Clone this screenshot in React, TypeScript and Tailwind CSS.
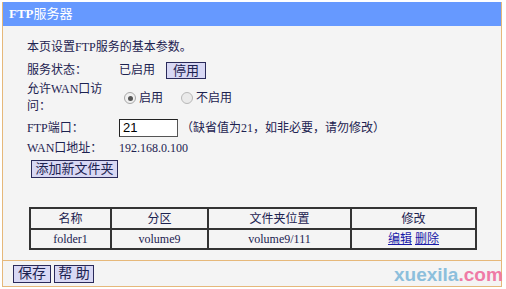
import React from 'react'

const font = { fontFamily: '"Liberation Serif", "Noto Sans CJK SC", serif' }

export default function App() {
  return (
    <div className="relative w-[506px] h-[289px] bg-white text-[12px] text-[#1c2250]" style={font}>
      <div className="ml-[2px] mt-[2px] w-[500px] border-x border-b border-[#e6b87a]">
        {/* title bar */}
        <div className="h-[24px] bg-[#6699ff] pl-[6px] flex items-center text-white text-[13px]">
          <span className="font-bold">FTP</span>
          <span>服务器</span>
        </div>

        <div className="bg-[#f4f4f4] pl-[24px] pt-[11px] pb-[10px] border-b border-[#e6b87a]">
          <div className="h-[20px] flex items-center">本页设置FTP服务的基本参数。</div>

          <div className="mt-[3px] h-[20px] flex items-center">
            <div className="w-[92px]">服务状态：</div>
            <span>已启用</span>
            <button className="ml-[11px] w-[40px] h-[17px] bg-[#d8d8f4] border border-[#2a2a5a] leading-[15px] text-[13px]">停用</button>
          </div>

          <div className="h-[36px] flex items-center">
            <div className="w-[92px] leading-[17px]">
              <div className="w-[80px]">允许WAN口访问：</div>
            </div>
            <label className="ml-[5px] flex items-center gap-[3px]">
              <span className="w-[12px] h-[12px] rounded-full border border-[#a8a8a8] bg-[#f0f0f0] flex items-center justify-center">
                <span className="w-[5px] h-[5px] rounded-full bg-[#555]" />
              </span>
              启用
            </label>
            <label className="ml-[18px] flex items-center gap-[3px]">
              <span className="w-[12px] h-[12px] rounded-full border border-[#b8b8b8] bg-[#eaeaea]" />
              不启用
            </label>
          </div>

          <div className="mt-[2px] h-[19px] flex items-center">
            <div className="w-[92px]">FTP端口：</div>
            <div className="w-[59px] h-[18px] bg-white border border-[#555] border-t-[#222] border-l-[#222] pl-[3px] leading-[16px] text-[13px] text-black" style={{ fontFamily: '"Liberation Sans", sans-serif' }}>21</div>
            <span className="ml-[3px]">（缺省值为21，如非必要，请勿修改）</span>
          </div>

          <div className="mt-[1px] h-[20px] flex items-center">
            <div className="w-[92px]">WAN口地址：</div>
            <span>192.168.0.100</span>
          </div>

          <button className="mt-[2px] ml-[4px] w-[87px] h-[18px] bg-[#d8d8f4] border border-[#2a2a5a] leading-[16px] text-[13px] block">添加新文件夹</button>

          <table className="mt-[29px] ml-[2px] w-[448px] border-collapse text-center border-2 border-[#333]">
            <tbody>
              <tr className="h-[21px]">
                <td className="w-[81px] border-2 border-[#333]">名称</td>
                <td className="w-[97px] border-2 border-[#333]">分区</td>
                <td className="w-[143px] border-2 border-[#333]">文件夹位置</td>
                <td className="border-2 border-[#333]">修改</td>
              </tr>
              <tr className="h-[20px]">
                <td className="border-2 border-[#333]">folder1</td>
                <td className="border-2 border-[#333]">volume9</td>
                <td className="border-2 border-[#333]">volume9/111</td>
                <td className="border-2 border-[#333]">
                  <a className="text-[#1a1aa8] underline">编辑</a> <a className="text-[#1a1aa8] underline">删除</a>
                </td>
              </tr>
            </tbody>
          </table>
        </div>

        <div className="bg-[#f4f4f4] h-[25px] pl-[10px] pt-[4px] flex items-start gap-[3px]">
          <button className="w-[38px] h-[18px] bg-[#d8d8f4] border border-[#2a2a5a] leading-[16px] text-[14px]">保存</button>
          <button className="w-[40px] h-[18px] bg-[#d8d8f4] border border-[#2a2a5a] leading-[16px] text-[14px]">帮 助</button>
        </div>
      </div>

      <div className="absolute left-[394px] top-[261px] text-[19px] font-bold leading-[24px] whitespace-nowrap" style={{ fontFamily: '"Liberation Sans", Arial, sans-serif' }}>
        <span className="text-[#8cbfdc]">xuexila</span>
        <span className="text-[#ef7aa6]">.com</span>
      </div>
    </div>
  )
}
